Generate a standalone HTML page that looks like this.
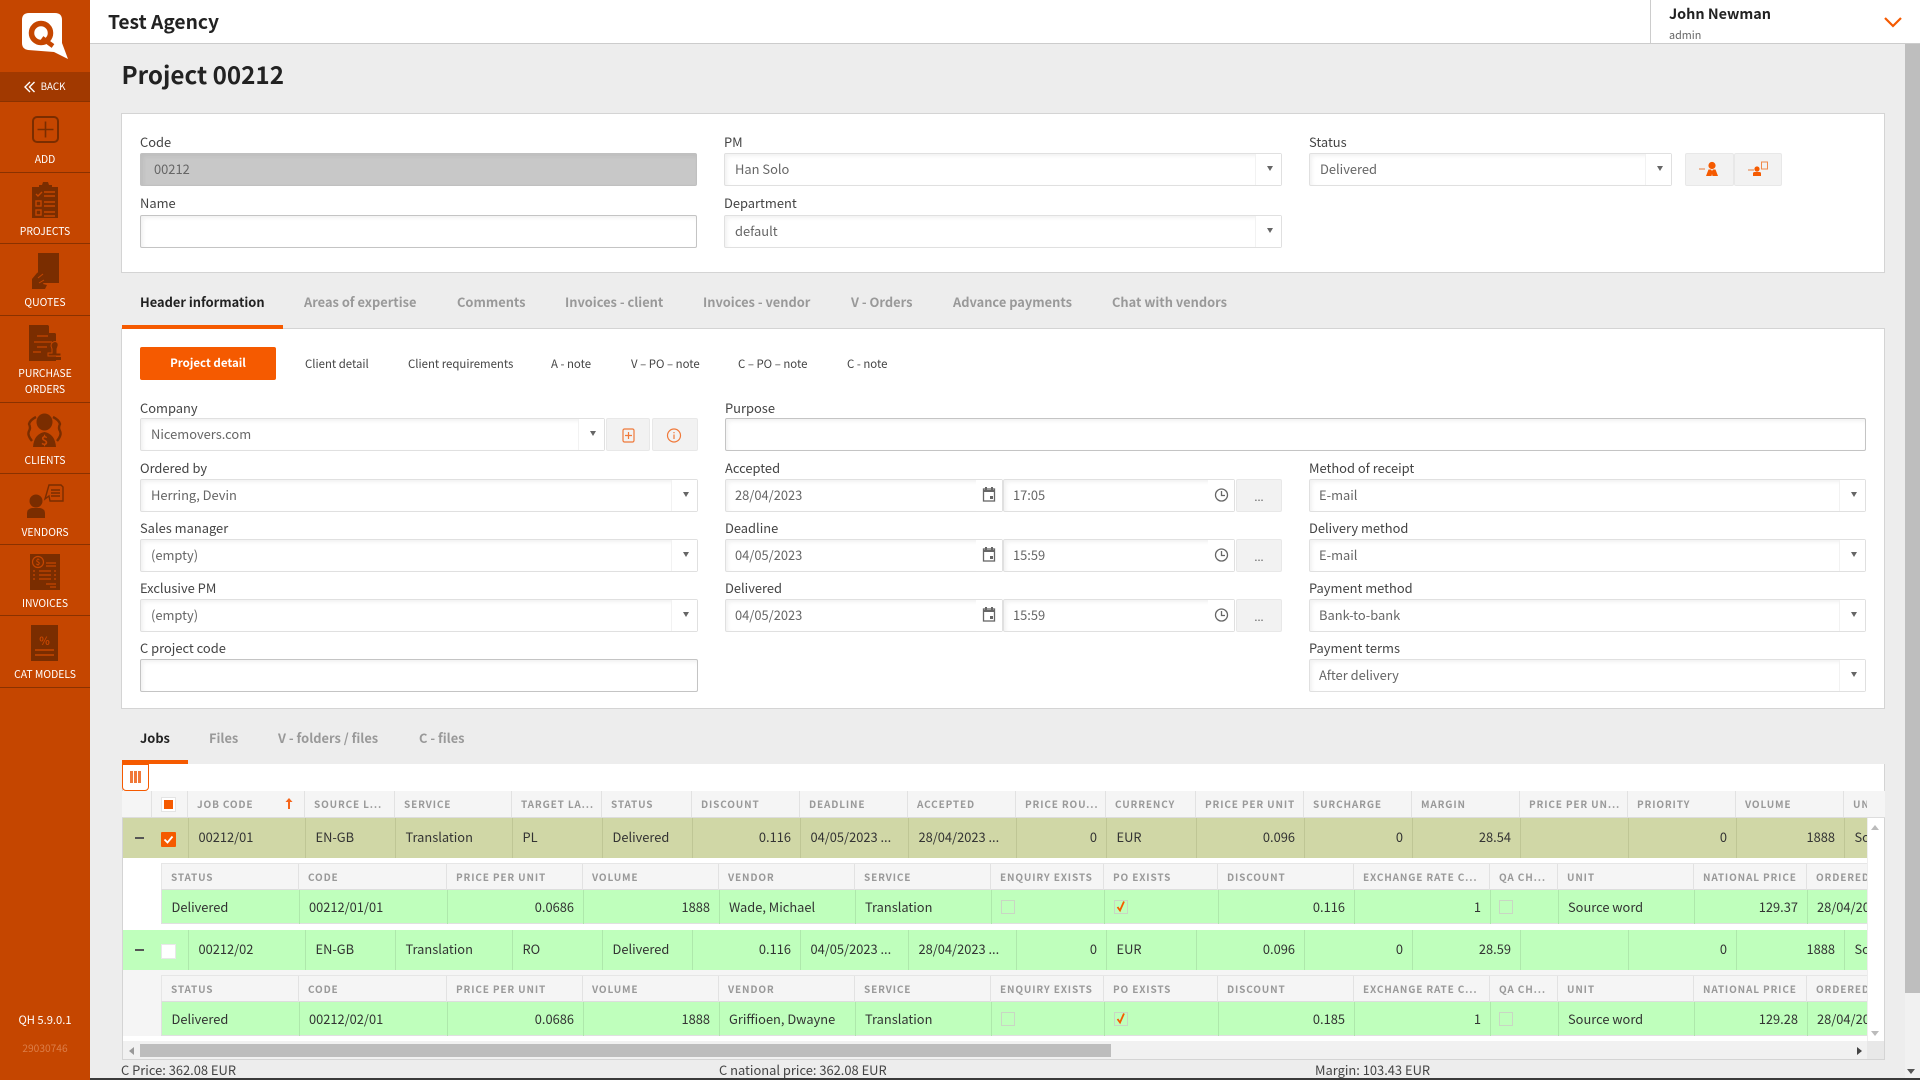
<!DOCTYPE html>
<html><head><meta charset="utf-8"><title>Project 00212</title>
<style>
*{box-sizing:border-box}
html,body{margin:0;padding:0;width:1920px;height:1080px;overflow:hidden;background:#ededed;font-family:"Noto Sans CJK SC","Liberation Sans",sans-serif;color:#444}
.a{position:absolute}
.t{position:absolute;white-space:nowrap;line-height:20px;font-size:12.9px;color:#444}
.nav{position:absolute;left:0;width:90px;text-align:center;color:#fff;font-size:10.4px;line-height:16px;white-space:nowrap}
.ln{position:absolute;left:0;width:90px;height:1px;background:#8a3200}
.tab{position:absolute;white-space:nowrap;line-height:20px;font-size:12.85px;font-weight:700;color:#999;top:292px}
.sub{position:absolute;top:354px;white-space:nowrap;line-height:20px;font-size:11.4px;color:#444}
.i{position:absolute;height:33px;background:#fff;border:1px solid #e0e0e0;border-radius:2px;box-shadow:inset 2px 2px 4px rgba(0,0,0,.06);font-size:12.9px;line-height:30px;color:#666;padding-left:10px;white-space:nowrap}
.ar{position:absolute;top:0;right:0;width:26px;height:31px;background:#fff;border-left:1px solid #f2f2f2}
.ar:after{content:"";position:absolute;left:11px;top:12px;border-left:3.5px solid transparent;border-right:3.5px solid transparent;border-top:5.5px solid #666}
.b{position:absolute;height:33px;background:#f2f2f2;border:1px solid #e8e8e8;border-radius:2px;text-align:center;font-size:11px;line-height:34px;color:#666}
.ic{position:absolute;top:0;right:0;width:26px;height:31px;background:#fff}
.clip{position:absolute;left:0;top:0;width:1867px;height:1080px;overflow:hidden}
.row{position:absolute;left:0;width:1867px}
.bg{position:absolute;top:0;bottom:0;right:0}
.c{position:absolute;top:0;bottom:0;padding:0 9px 0 9.5px;border-left:1px solid;font-size:12.85px;color:#333;white-space:nowrap;overflow:hidden}
.r{text-align:right}
.g{border-color:#bfc695}.g,.m{line-height:38px}
.m{border-color:#aee8ab}
.n{border-color:#aee8ab;line-height:33px;padding-left:9px}
.h{background:#f5f5f5}
.hc{position:absolute;top:0;bottom:0;padding-left:9px;border-left:1px solid #e2e2e2;font-size:10px;font-weight:700;letter-spacing:.85px;color:#999;white-space:nowrap;overflow:hidden;line-height:25px}
.ck{position:absolute;width:14px;height:14px;border:1px solid #c9d6c4;background:transparent}
</style></head><body>

<!-- top bar -->
<div class="a" style="left:90px;top:0;width:1830px;height:44px;background:#fff;border-bottom:1px solid #ccc"></div>
<div class="t" style="left:108px;top:10px;font-size:19.2px;font-weight:700;color:#222;line-height:22px">Test Agency</div>
<div class="a" style="left:1650px;top:0;width:1px;height:44px;background:#ccc"></div>
<div class="t" style="left:1669px;top:4px;font-size:14.4px;font-weight:700;color:#222">John Newman</div>
<div class="t" style="left:1669px;top:25px;font-size:10.8px;color:#666">admin</div>
<svg class="a" style="left:1883px;top:15px" width="20" height="14"><path d="M2 3l8 8 8-8" fill="none" stroke="#f55a00" stroke-width="2.2"/></svg>

<!-- page scrollbar -->
<div class="a" style="left:1905px;top:44px;width:15px;height:1036px;background:#f1f1f1"></div>
<div class="a" style="left:1905px;top:44px;width:15px;height:949px;background:#bebebe"></div>
<div class="a" style="left:1907px;top:1069px;border-left:4px solid transparent;border-right:4px solid transparent;border-top:5px solid #555"></div>
<div class="a" style="left:0;top:1078px;width:1920px;height:2px;background:#3a3a3a"></div>

<!-- sidebar -->
<div class="a" style="left:0;top:0;width:90px;height:1080px;background:#c54600"></div>
<div class="a" style="left:0;top:72px;width:90px;height:29px;background:#a13900"></div>
<div class="ln" style="top:101px"></div><div class="ln" style="top:172px"></div><div class="ln" style="top:243px"></div><div class="ln" style="top:315px"></div><div class="ln" style="top:402px"></div><div class="ln" style="top:473px"></div><div class="ln" style="top:544px"></div><div class="ln" style="top:615px"></div><div class="ln" style="top:687px"></div>

<svg class="a" style="left:0;top:0" width="90" height="700">
 <!-- logo -->
 <path d="M29 13h26q7 0 7 7v23l6 16-14-7-26-2q-6-1-6-7V20q0-7 7-7z" fill="#fff"/>
 <circle cx="41" cy="33" r="9.500" fill="none" stroke="#c54600" stroke-width="5.500"/>
 <path d="M42 38l11 8" stroke="#c54600" stroke-width="4.500" fill="none"/>
 <path d="M30 82l-5 5 5 5M34.500 82l-5 5 5 5" fill="none" stroke="#fff" stroke-width="1.400"/>
 <g fill="#7a2d00" stroke="none">
  <!-- add -->
  <rect x="33" y="117" width="25" height="25" rx="4" fill="none" stroke="#7a2d00" stroke-width="2"/>
  <path d="M45.500 121.500v16M37.500 129.500h16" stroke="#7a2d00" stroke-width="1.600" fill="none"/>
  <!-- projects -->
  <path d="M32 187h7v-2h3l1-3h5l1 3h3v2h6v31H32z"/>
  <g fill="none" stroke="#c54600" stroke-width="1.400">
   <path d="M36 194l2 2 4-4M44 192h11M44 196h11M44 202h11M44 206h11M44 212h11M44 216h11"/>
   <rect x="36" y="201" width="5" height="5"/><rect x="36" y="210" width="5" height="5"/>
  </g>
  <!-- quotes -->
  <rect x="38" y="253" width="21" height="30"/>
  <path d="M32 289v-10l5-6 3-2-1 4 5-3 1 2-3 5 3 1-2 4 4 1-2 4z"/>
  <path d="M38 278l5-4M39 283l5-3" stroke="#c54600" stroke-width="1" fill="none"/>
  <!-- PO -->
  <path d="M29 325h19l8 9v27H29z"/>
  <path d="M49 325l7 8h-7z" fill="#c54600"/>
  <path d="M37 336h11M34 342h18M37 347h10M33 352h8" stroke="#c54600" stroke-width="1.200" fill="none"/>
  <path d="M52 343c3-3 7-1 6 3l-1 3v4h4v3h-13v-3h4v-4l-1-3c0-1 0-2 1-3z" stroke="#c54600" stroke-width="1"/>
  <rect x="49" y="357" width="12" height="3"/>
  <!-- clients -->
  <ellipse cx="44.500" cy="422" rx="8" ry="8.500"/>
  <path d="M33 447q1-13 11.500-15 10.500 2 11.500 15z"/>
  <path d="M36 417q-6 3-7 7 2 4 0 7-2 4 3 10M53 417q6 3 7 7-2 4 0 7 2 4-3 10" stroke="#7a2d00" stroke-width="2.400" fill="none"/>
  <!-- vendors -->
  <circle cx="36" cy="501" r="6.500"/>
  <path d="M27 518v-5q0-4 5-5h8q5 1 5 5v5z"/>
  <path d="M49 485h12l2 2v14H50l-1-5-4 3z" fill="none" stroke="#7a2d00" stroke-width="1.400"/>
  <path d="M51 490h9M51 493h9M51 496h9" stroke="#7a2d00" stroke-width="1.600" fill="none"/>
  <!-- invoices -->
  <rect x="30" y="554" width="30" height="36"/>
  <circle cx="38" cy="562" r="5.500" fill="none" stroke="#c54600" stroke-width="1.200"/>
  <path d="M46 563h10M46 566h10M33 571h2M39 571h12M54 571h2M33 575h2M39 575h12M54 575h2M33 579h2M39 579h12M54 579h2M46 584h10M50 587h6" stroke="#c54600" stroke-width="1.200" fill="none"/>
  <!-- cat -->
  <rect x="31" y="625" width="27" height="36"/>
  <path d="M35 650h19M35 655h19" stroke="#c54600" stroke-width="1.500" fill="none"/>
 </g>
 <text x="44.500" y="645" text-anchor="middle" font-size="11" font-weight="700" fill="#c54600" font-family="Noto Sans CJK SC,sans-serif">%</text>
 <text x="38" y="565" text-anchor="middle" font-size="8" font-weight="700" fill="#c54600" font-family="Noto Sans CJK SC,sans-serif">$</text>
 <text x="44.500" y="445" text-anchor="middle" font-size="12" font-weight="700" fill="#c54600" font-family="Noto Sans CJK SC,sans-serif">$</text>
</svg>
<div class="nav" style="top:78px;left:8px;font-size:9.8px">BACK</div>
<div class="nav" style="top:151px">ADD</div>
<div class="nav" style="top:223px">PROJECTS</div>
<div class="nav" style="top:294px">QUOTES</div>
<div class="nav" style="top:365px">PURCHASE</div>
<div class="nav" style="top:381px">ORDERS</div>
<div class="nav" style="top:452px">CLIENTS</div>
<div class="nav" style="top:524px">VENDORS</div>
<div class="nav" style="top:595px">INVOICES</div>
<div class="nav" style="top:666px">CAT MODELS</div>
<div class="nav" style="top:1012px;font-size:11.2px">QH 5.9.0.1</div>
<div class="nav" style="top:1040px;font-size:10.2px;color:#dc7e48">29030746</div>

<!-- title -->
<div class="t" style="left:121.500px;top:56px;font-size:24.200px;font-weight:700;color:#222;line-height:36px">Project 00212</div>

<!-- top panel -->
<div class="a" style="left:121px;top:113px;width:1764px;height:160px;background:#fff;border:1px solid #d4d4d4"></div>
<div class="t" style="left:140px;top:132px">Code</div>
<div class="i" style="left:140px;top:153px;width:557px;background:#c8c8c8;border-color:#c0c0c0;padding-left:13px;color:#666">00212</div>
<div class="t" style="left:140px;top:193px">Name</div>
<div class="i" style="left:140px;top:215px;width:557px;border-color:#c4c4c4"></div>
<div class="t" style="left:724px;top:132px">PM</div>
<div class="i" style="left:724px;top:153px;width:558px">Han Solo<span class="ar"></span></div>
<div class="t" style="left:724px;top:193px">Department</div>
<div class="i" style="left:724px;top:215px;width:558px">default<span class="ar"></span></div>
<div class="t" style="left:1309px;top:132px">Status</div>
<div class="i" style="left:1309px;top:153px;width:363px">Delivered<span class="ar"></span></div>
<div class="b" style="left:1685px;top:153px;width:49px"></div>
<div class="b" style="left:1734px;top:153px;width:48px"></div>
<svg class="a" style="left:1695px;top:158px" width="80" height="24" fill="#f55a00">
 <path d="M4 11h6" stroke="#e67a3a" stroke-width="1"/><circle cx="17" cy="7.500" r="3.600"/><path d="M11 18l2.500-6.500h2.500l1 1.500 1-1.500h2.500l2.500 6.500h-5.500l-.5-2-.5 2z"/>
 <path d="M53 12h6" stroke="#e67a3a" stroke-width="1"/><circle cx="62" cy="11" r="2.600"/><path d="M58 18v-2.500q0-1.500 1.500-1.500h5q1.500 0 1.500 1.500v2.500z"/><rect x="66.500" y="4" width="6" height="7" fill="none" stroke="#f0894b"/>
</svg>

<!-- main tabs -->
<div class="tab" style="left:140px;color:#222">Header information</div>
<div class="tab" style="left:304px">Areas of expertise</div>
<div class="tab" style="left:457px">Comments</div>
<div class="tab" style="left:565px">Invoices - client</div>
<div class="tab" style="left:703px">Invoices - vendor</div>
<div class="tab" style="left:851px">V - Orders</div>
<div class="tab" style="left:953px">Advance payments</div>
<div class="tab" style="left:1112px">Chat with vendors</div>

<!-- detail panel -->
<div class="a" style="left:121px;top:328px;width:1764px;height:381px;background:#fff;border:1px solid #d4d4d4"></div>
<div class="a" style="left:122px;top:325px;width:161px;height:4px;background:#f55a00"></div>
<div class="a" style="left:140px;top:347px;width:136px;height:33px;background:#f55a00;border-radius:2px;color:#fff;font-size:11.500px;font-weight:700;text-align:center;line-height:32px">Project detail</div>
<div class="sub" style="left:305px">Client detail</div>
<div class="sub" style="left:408px">Client requirements</div>
<div class="sub" style="left:551px">A - note</div>
<div class="sub" style="left:631px">V – PO – note</div>
<div class="sub" style="left:738px">C – PO – note</div>
<div class="sub" style="left:847px">C - note</div>

<!-- col 1 -->
<div class="t" style="left:140px;top:398px">Company</div>
<div class="i" style="left:140px;top:418px;width:465px">Nicemovers.com<span class="ar"></span></div>
<div class="b" style="left:606px;top:418px;width:44px"></div>
<div class="b" style="left:652px;top:418px;width:46px"></div>
<svg class="a" style="left:620px;top:426px" width="70" height="18" fill="none" stroke="#f0793a" stroke-width="1.200">
 <rect x="3" y="3" width="11" height="13" rx="1.500"/><path d="M8.500 6v7M5 9.500h7"/>
 <circle cx="54" cy="9.500" r="6.500"/><path d="M54 8.500v4.500M54 6v1.300"/>
</svg>
<div class="t" style="left:140px;top:458px">Ordered by</div>
<div class="i" style="left:140px;top:479px;width:558px">Herring, Devin<span class="ar"></span></div>
<div class="t" style="left:140px;top:518px">Sales manager</div>
<div class="i" style="left:140px;top:539px;width:558px">(empty)<span class="ar"></span></div>
<div class="t" style="left:140px;top:578px">Exclusive PM</div>
<div class="i" style="left:140px;top:599px;width:558px">(empty)<span class="ar"></span></div>
<div class="t" style="left:140px;top:638px">C project code</div>
<div class="i" style="left:140px;top:659px;width:558px;border-color:#c4c4c4"></div>

<!-- col 2 -->
<div class="t" style="left:725px;top:398px">Purpose</div>
<div class="i" style="left:725px;top:418px;width:1141px;border-color:#c4c4c4"></div>
<div class="t" style="left:725px;top:458px">Accepted</div>
<div class="i" style="left:725px;top:479px;width:278px;padding-left:9px">28/04/2023<span class="ic"></span></div>
<div class="i" style="left:1003px;top:479px;width:232px;padding-left:9px">17:05<span class="ic"></span></div>
<div class="b" style="left:1236px;top:479px;width:46px">...</div>
<div class="t" style="left:725px;top:518px">Deadline</div>
<div class="i" style="left:725px;top:539px;width:278px;padding-left:9px">04/05/2023<span class="ic"></span></div>
<div class="i" style="left:1003px;top:539px;width:232px;padding-left:9px">15:59<span class="ic"></span></div>
<div class="b" style="left:1236px;top:539px;width:46px">...</div>
<div class="t" style="left:725px;top:578px">Delivered</div>
<div class="i" style="left:725px;top:599px;width:278px;padding-left:9px">04/05/2023<span class="ic"></span></div>
<div class="i" style="left:1003px;top:599px;width:232px;padding-left:9px">15:59<span class="ic"></span></div>
<div class="b" style="left:1236px;top:599px;width:46px">...</div>
<svg class="a" style="left:980px;top:482px" width="250" height="150" fill="none" stroke="#666" stroke-width="1.300">
 <g><rect x="3.500" y="7" width="11" height="12"/><path d="M3.500 9h11M6 5v3M12 5v3" stroke-width="2"/><rect x="10" y="14" width="3" height="3" fill="#666" stroke="none"/><circle cx="241.500" cy="13" r="6"/><path d="M241.500 9v4.500h3.500"/></g>
 <g transform="translate(0 60)"><rect x="3.500" y="7" width="11" height="12"/><path d="M3.500 9h11M6 5v3M12 5v3" stroke-width="2"/><rect x="10" y="14" width="3" height="3" fill="#666" stroke="none"/><circle cx="241.500" cy="13" r="6"/><path d="M241.500 9v4.500h3.500"/></g>
 <g transform="translate(0 120)"><rect x="3.500" y="7" width="11" height="12"/><path d="M3.500 9h11M6 5v3M12 5v3" stroke-width="2"/><rect x="10" y="14" width="3" height="3" fill="#666" stroke="none"/><circle cx="241.500" cy="13" r="6"/><path d="M241.500 9v4.500h3.500"/></g>
</svg>

<!-- col 3 -->
<div class="t" style="left:1309px;top:458px">Method of receipt</div>
<div class="i" style="left:1309px;top:479px;width:557px;padding-left:9px">E-mail<span class="ar"></span></div>
<div class="t" style="left:1309px;top:518px">Delivery method</div>
<div class="i" style="left:1309px;top:539px;width:557px;padding-left:9px">E-mail<span class="ar"></span></div>
<div class="t" style="left:1309px;top:578px">Payment method</div>
<div class="i" style="left:1309px;top:599px;width:557px;padding-left:9px">Bank-to-bank<span class="ar"></span></div>
<div class="t" style="left:1309px;top:638px">Payment terms</div>
<div class="i" style="left:1309px;top:659px;width:557px;padding-left:9px">After delivery<span class="ar"></span></div>

<!-- lower tabs -->
<div class="tab" style="left:140px;top:728px;color:#222">Jobs</div>
<div class="tab" style="left:209px;top:728px">Files</div>
<div class="tab" style="left:278px;top:728px">V - folders / files</div>
<div class="tab" style="left:419px;top:728px">C - files</div>

<!-- grid -->
<div class="a" style="left:122px;top:764px;width:1763px;height:296px;background:#fff;border:1px solid #d4d4d4;border-top:0"></div>
<div class="a" style="left:122px;top:760px;width:66px;height:4px;background:#f55a00"></div>
<div class="a" style="left:122px;top:764px;width:27px;height:27px;background:#fff;border:1px solid #f55a00;border-radius:0 0 4px 4px"></div>
<div class="a" style="left:130px;top:771px;width:2.500px;height:12px;background:#f0793a"></div>
<div class="a" style="left:134px;top:771px;width:2.500px;height:12px;background:#f0793a"></div>
<div class="a" style="left:138px;top:771px;width:2.500px;height:12px;background:#f0793a"></div>

<div class="a h" style="left:122px;top:791px;width:1763px;height:27px;border-bottom:1px solid #ddd"></div>
<div class="a" style="left:1867px;top:818px;width:17px;height:241px;background:#fff;border-left:1px solid #eee"></div>
<div class="a" style="left:1871px;top:825px;border-left:4px solid transparent;border-right:4px solid transparent;border-bottom:5px solid #bbb"></div>
<div class="a" style="left:1871px;top:1031px;border-left:4px solid transparent;border-right:4px solid transparent;border-top:5px solid #bbb"></div>

<div class="clip">
 <!-- header -->
 <div class="row" style="top:791px;height:26px;width:1868px">
  <div class="hc" style="left:151px;width:37px"></div>
  <div class="hc" style="left:187px;width:117px">JOB CODE</div>
  <div class="hc" style="left:304px;width:90px">SOURCE L...</div>
  <div class="hc" style="left:394px;width:117px">SERVICE</div>
  <div class="hc" style="left:511px;width:90px">TARGET LA...</div>
  <div class="hc" style="left:601px;width:90px">STATUS</div>
  <div class="hc" style="left:691px;width:108px">DISCOUNT</div>
  <div class="hc" style="left:799px;width:108px">DEADLINE</div>
  <div class="hc" style="left:907px;width:108px">ACCEPTED</div>
  <div class="hc" style="left:1015px;width:90px">PRICE ROU...</div>
  <div class="hc" style="left:1105px;width:90px">CURRENCY</div>
  <div class="hc" style="left:1195px;width:108px">PRICE PER UNIT</div>
  <div class="hc" style="left:1303px;width:108px">SURCHARGE</div>
  <div class="hc" style="left:1411px;width:108px">MARGIN</div>
  <div class="hc" style="left:1519px;width:108px">PRICE PER UN...</div>
  <div class="hc" style="left:1627px;width:108px">PRIORITY</div>
  <div class="hc" style="left:1735px;width:108px">VOLUME</div>
  <div class="hc" style="left:1843px;width:25px;border-right:1px solid #e2e2e2">UN</div>
 </div>

 <!-- row 1 -->
 <div class="row" style="top:818px;height:40px">
  <div class="bg" style="left:123px;background:#d0d7a6"></div>
  <div class="c g" style="left:188px;width:117px">00212/01</div>
  <div class="c g" style="left:305px;width:90px">EN-GB</div>
  <div class="c g" style="left:395px;width:117px">Translation</div>
  <div class="c g" style="left:512px;width:90px">PL</div>
  <div class="c g" style="left:602px;width:90px">Delivered</div>
  <div class="c g r" style="left:692px;width:108px">0.116</div>
  <div class="c g" style="left:800px;width:108px">04/05/2023 ...</div>
  <div class="c g" style="left:908px;width:108px">28/04/2023 ...</div>
  <div class="c g r" style="left:1016px;width:90px">0</div>
  <div class="c g" style="left:1106px;width:90px">EUR</div>
  <div class="c g r" style="left:1196px;width:108px">0.096</div>
  <div class="c g r" style="left:1304px;width:108px">0</div>
  <div class="c g r" style="left:1412px;width:108px">28.54</div>
  <div class="c g r" style="left:1520px;width:108px"></div>
  <div class="c g r" style="left:1628px;width:108px">0</div>
  <div class="c g r" style="left:1736px;width:108px">1888</div>
  <div class="c g" style="left:1844px;width:60px">Source word</div>
 </div>

 <!-- nested 1 -->
 <div class="a h" style="left:161px;top:863px;width:1710px;height:27px;border:1px solid #e6e6e6;border-bottom-color:#ddd"></div>
 <div class="row" style="top:864px;height:26px">
  <div class="hc" style="left:162px;width:136px;border-left:0">STATUS</div>
  <div class="hc" style="left:298px;width:148px">CODE</div>
  <div class="hc" style="left:446px;width:136px">PRICE PER UNIT</div>
  <div class="hc" style="left:582px;width:136px">VOLUME</div>
  <div class="hc" style="left:718px;width:136px">VENDOR</div>
  <div class="hc" style="left:854px;width:136px">SERVICE</div>
  <div class="hc" style="left:990px;width:113px">ENQUIRY EXISTS</div>
  <div class="hc" style="left:1103px;width:114px">PO EXISTS</div>
  <div class="hc" style="left:1217px;width:136px">DISCOUNT</div>
  <div class="hc" style="left:1353px;width:136px">EXCHANGE RATE C...</div>
  <div class="hc" style="left:1489px;width:68px">QA CH...</div>
  <div class="hc" style="left:1557px;width:136px">UNIT</div>
  <div class="hc" style="left:1693px;width:113px">NATIONAL PRICE</div>
  <div class="hc" style="left:1806px;width:61px">ORDERED</div>
 </div>
 <div class="row" style="top:890px;height:34px">
  <div class="bg" style="left:161px;background:#bfffbc;border:1px solid #e0e0e0;border-top:0;border-right:0"></div>
  <div class="c n" style="left:299px;width:148px">00212/01/01</div>
  <div class="c" style="left:162px;width:137px;border:0;line-height:33px">Delivered</div>
  <div class="c n r" style="left:447px;width:136px">0.0686</div>
  <div class="c n r" style="left:583px;width:136px">1888</div>
  <div class="c n" style="left:719px;width:136px">Wade, Michael</div>
  <div class="c n" style="left:855px;width:136px">Translation</div>
  <div class="c n" style="left:991px;width:113px"></div>
  <div class="c n" style="left:1104px;width:114px"></div>
  <div class="c n r" style="left:1218px;width:136px">0.116</div>
  <div class="c n r" style="left:1354px;width:136px">1</div>
  <div class="c n" style="left:1490px;width:68px"></div>
  <div class="c n" style="left:1558px;width:136px">Source word</div>
  <div class="c n r" style="left:1694px;width:113px">129.37</div>
  <div class="c n" style="left:1807px;width:80px">28/04/2023</div>
 </div>

 <!-- row 2 -->
 <div class="row" style="top:930px;height:40px">
  <div class="bg" style="left:123px;background:#bfffbc"></div>
  <div class="c m" style="left:188px;width:117px">00212/02</div>
  <div class="c m" style="left:305px;width:90px">EN-GB</div>
  <div class="c m" style="left:395px;width:117px">Translation</div>
  <div class="c m" style="left:512px;width:90px">RO</div>
  <div class="c m" style="left:602px;width:90px">Delivered</div>
  <div class="c m r" style="left:692px;width:108px">0.116</div>
  <div class="c m" style="left:800px;width:108px">04/05/2023 ...</div>
  <div class="c m" style="left:908px;width:108px">28/04/2023 ...</div>
  <div class="c m r" style="left:1016px;width:90px">0</div>
  <div class="c m" style="left:1106px;width:90px">EUR</div>
  <div class="c m r" style="left:1196px;width:108px">0.096</div>
  <div class="c m r" style="left:1304px;width:108px">0</div>
  <div class="c m r" style="left:1412px;width:108px">28.59</div>
  <div class="c m r" style="left:1520px;width:108px"></div>
  <div class="c m r" style="left:1628px;width:108px">0</div>
  <div class="c m r" style="left:1736px;width:108px">1888</div>
  <div class="c m" style="left:1844px;width:60px">Source word</div>
 </div>

 <!-- nested 2 -->
 <div class="a" style="left:123px;top:970px;width:1744px;height:66px;background:#f5f5f5"></div>
 <div class="a h" style="left:161px;top:975px;width:1710px;height:27px;border:1px solid #e6e6e6;border-bottom-color:#ddd"></div>
 <div class="row" style="top:976px;height:26px">
  <div class="hc" style="left:162px;width:136px;border-left:0">STATUS</div>
  <div class="hc" style="left:298px;width:148px">CODE</div>
  <div class="hc" style="left:446px;width:136px">PRICE PER UNIT</div>
  <div class="hc" style="left:582px;width:136px">VOLUME</div>
  <div class="hc" style="left:718px;width:136px">VENDOR</div>
  <div class="hc" style="left:854px;width:136px">SERVICE</div>
  <div class="hc" style="left:990px;width:113px">ENQUIRY EXISTS</div>
  <div class="hc" style="left:1103px;width:114px">PO EXISTS</div>
  <div class="hc" style="left:1217px;width:136px">DISCOUNT</div>
  <div class="hc" style="left:1353px;width:136px">EXCHANGE RATE C...</div>
  <div class="hc" style="left:1489px;width:68px">QA CH...</div>
  <div class="hc" style="left:1557px;width:136px">UNIT</div>
  <div class="hc" style="left:1693px;width:113px">NATIONAL PRICE</div>
  <div class="hc" style="left:1806px;width:61px">ORDERED</div>
 </div>
 <div class="row" style="top:1002px;height:34px">
  <div class="bg" style="left:161px;background:#bfffbc;border:1px solid #e0e0e0;border-top:0;border-right:0"></div>
  <div class="c" style="left:162px;width:137px;border:0;line-height:33px">Delivered</div>
  <div class="c n" style="left:299px;width:148px">00212/02/01</div>
  <div class="c n r" style="left:447px;width:136px">0.0686</div>
  <div class="c n r" style="left:583px;width:136px">1888</div>
  <div class="c n" style="left:719px;width:136px">Griffioen, Dwayne</div>
  <div class="c n" style="left:855px;width:136px">Translation</div>
  <div class="c n" style="left:991px;width:113px"></div>
  <div class="c n" style="left:1104px;width:114px"></div>
  <div class="c n r" style="left:1218px;width:136px">0.185</div>
  <div class="c n r" style="left:1354px;width:136px">1</div>
  <div class="c n" style="left:1490px;width:68px"></div>
  <div class="c n" style="left:1558px;width:136px">Source word</div>
  <div class="c n r" style="left:1694px;width:113px">129.28</div>
  <div class="c n" style="left:1807px;width:80px">28/04/2023</div>
 </div>
</div>

<!-- header controls -->
<div class="a" style="left:161px;top:797px;width:15px;height:15px;background:#fff;border:1px solid #e4e4e4"></div>
<div class="a" style="left:164px;top:800px;width:9px;height:9px;background:#f55a00"></div>
<svg class="a" style="left:284px;top:797px" width="10" height="13"><path d="M5 1l3.500 4H6v7H4V5H1.500z" fill="#f5651a"/></svg>
<!-- expanders -->
<div class="a" style="left:135px;top:837px;width:9px;height:1.500px;background:#555"></div>
<div class="a" style="left:135px;top:949px;width:9px;height:1.500px;background:#555"></div>
<div class="a" style="left:161px;top:832px;width:15px;height:15px;background:#f55a00;border-radius:1px"></div>
<svg class="a" style="left:161px;top:832px" width="15" height="15"><path d="M3.500 7.500l3 3 5-6" fill="none" stroke="#fff" stroke-width="1.800"/></svg>
<div class="a" style="left:161px;top:944px;width:15px;height:15px;background:#fff;border:1px solid #e8e8e8"></div>
<!-- checkboxes -->
<div class="ck" style="left:1001px;top:900px"></div><div class="ck" style="left:1114px;top:900px"></div><div class="ck" style="left:1499px;top:900px"></div>
<div class="ck" style="left:1001px;top:1012px"></div><div class="ck" style="left:1114px;top:1012px"></div><div class="ck" style="left:1499px;top:1012px"></div>
<svg class="a" style="left:1114px;top:899px" width="14" height="15"><path d="M3.500 8l2.500 3.500 4-9" fill="none" stroke="#f55a00" stroke-width="1.800"/></svg>
<svg class="a" style="left:1114px;top:1011px" width="14" height="15"><path d="M3.500 8l2.500 3.500 4-9" fill="none" stroke="#f55a00" stroke-width="1.800"/></svg>

<!-- h scroll -->
<div class="a" style="left:123px;top:1041px;width:1744px;height:18px;background:#f1f1f1"></div>
<div class="a" style="left:140px;top:1044px;width:971px;height:13px;background:#bdbdbd"></div>
<div class="a" style="left:129px;top:1047px;border-top:4px solid transparent;border-bottom:4px solid transparent;border-right:5px solid #999"></div>
<div class="a" style="left:1857px;top:1047px;border-top:4px solid transparent;border-bottom:4px solid transparent;border-left:5px solid #444"></div>
<div class="a" style="left:1867px;top:1041px;width:17px;height:18px;background:#e8e8e8"></div>

<!-- footer -->
<div class="t" style="left:121px;top:1060px">C Price: 362.08 EUR</div>
<div class="t" style="left:719px;top:1060px">C national price: 362.08 EUR</div>
<div class="t" style="left:1315px;top:1060px">Margin: 103.43 EUR</div>
</body></html>
